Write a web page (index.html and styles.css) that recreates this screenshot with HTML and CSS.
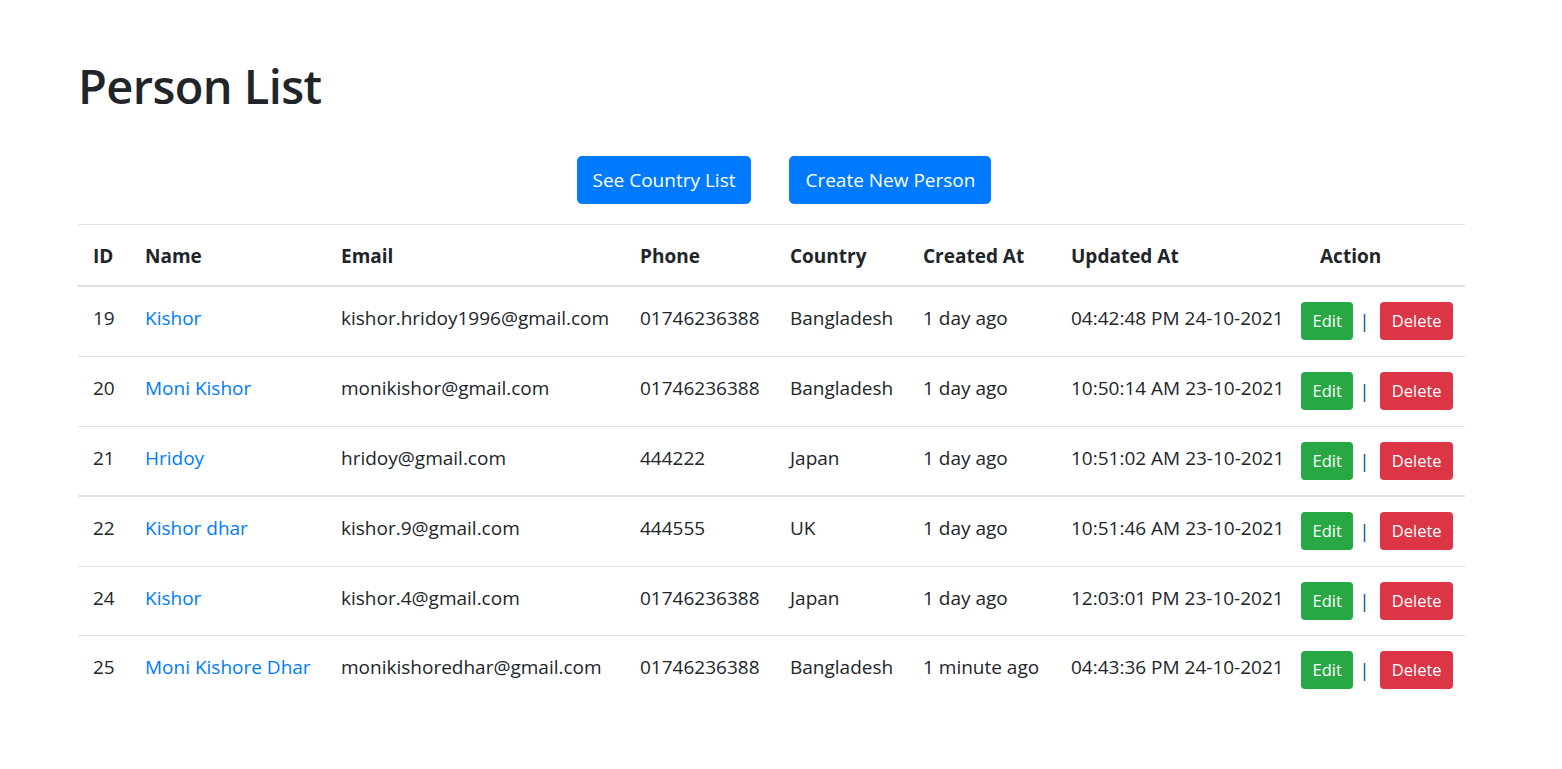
FILE: index.html
```html
<!DOCTYPE html>
<html lang="en">
<head>
<meta charset="utf-8">
<title>Person List</title>
<link rel="stylesheet" href="styles.css">
</head>
<body>
<div class="container">
  <h1 class="title">Person List</h1>
  <div class="toolbar">
    <a class="btn btn-primary" href="#">See Country List</a>
    <a class="btn btn-primary" href="#">Create New Person</a>
  </div>
  <table class="table">
    <colgroup>
      <col class="c-id"><col class="c-name"><col class="c-email"><col class="c-phone">
      <col class="c-country"><col class="c-created"><col class="c-updated"><col class="c-action">
    </colgroup>
    <thead>
      <tr>
        <th>ID</th><th>Name</th><th>Email</th><th>Phone</th><th>Country</th><th>Created At</th><th>Updated At</th><th class="th-action">Action</th>
      </tr>
    </thead>
    <tbody>
      <tr>
        <td>19</td><td><a href="#">Kishor</a></td><td>kishor.hridoy1996@gmail.com</td><td>01746236388</td><td>Bangladesh</td><td>1 day ago</td><td>04:42:48 PM 24-10-2021</td>
        <td class="td-action"><div class="actions"><a class="btn-sm btn-success" href="#">Edit</a><span class="sep">|</span><a class="btn-sm btn-danger" href="#">Delete</a></div></td>
      </tr>
      <tr>
        <td>20</td><td><a href="#">Moni Kishor</a></td><td>monikishor@gmail.com</td><td>01746236388</td><td>Bangladesh</td><td>1 day ago</td><td>10:50:14 AM 23-10-2021</td>
        <td class="td-action"><div class="actions"><a class="btn-sm btn-success" href="#">Edit</a><span class="sep">|</span><a class="btn-sm btn-danger" href="#">Delete</a></div></td>
      </tr>
      <tr class="short">
        <td>21</td><td><a href="#">Hridoy</a></td><td>hridoy@gmail.com</td><td>444222</td><td>Japan</td><td>1 day ago</td><td>10:51:02 AM 23-10-2021</td>
        <td class="td-action"><div class="actions"><a class="btn-sm btn-success" href="#">Edit</a><span class="sep">|</span><a class="btn-sm btn-danger" href="#">Delete</a></div></td>
      </tr>
      <tr class="thick">
        <td>22</td><td><a href="#">Kishor dhar</a></td><td>kishor.9@gmail.com</td><td>444555</td><td>UK</td><td>1 day ago</td><td>10:51:46 AM 23-10-2021</td>
        <td class="td-action"><div class="actions"><a class="btn-sm btn-success" href="#">Edit</a><span class="sep">|</span><a class="btn-sm btn-danger" href="#">Delete</a></div></td>
      </tr>
      <tr class="short">
        <td>24</td><td><a href="#">Kishor</a></td><td>kishor.4@gmail.com</td><td>01746236388</td><td>Japan</td><td>1 day ago</td><td>12:03:01 PM 23-10-2021</td>
        <td class="td-action"><div class="actions"><a class="btn-sm btn-success" href="#">Edit</a><span class="sep">|</span><a class="btn-sm btn-danger" href="#">Delete</a></div></td>
      </tr>
      <tr>
        <td>25</td><td><a href="#">Moni Kishore Dhar</a></td><td>monikishoredhar@gmail.com</td><td>01746236388</td><td>Bangladesh</td><td>1 minute ago</td><td>04:43:36 PM 24-10-2021</td>
        <td class="td-action"><div class="actions"><a class="btn-sm btn-success" href="#">Edit</a><span class="sep">|</span><a class="btn-sm btn-danger" href="#">Delete</a></div></td>
      </tr>
    </tbody>
  </table>
</div>
</body>
</html>
```

FILE: styles.css
```css
html, body {
  margin: 0;
  padding: 0;
  background: #fff;
}
body {
  font-family: "Open Sans", "Noto Sans", sans-serif;
  font-size: 19px;
  line-height: 30px;
  color: #212529;
}
.container {
  width: 1387px;
  margin-left: 78px;
  padding-top: 56px;
}
.title {
  margin: 0 0 40px 0;
  font-size: 47px;
  line-height: 60px;
  font-weight: 600;
  letter-spacing: -0.6px;
  color: #212529;
}
.toolbar {
  display: flex;
  justify-content: center;
  gap: 38px;
  padding-left: 25px;
  margin-bottom: 20px;
}
.btn {
  display: inline-block;
  height: 48px;
  box-sizing: border-box;
  padding: 9px 16px;
  font-size: 19px;
  line-height: 30px;
  border-radius: 5px;
  text-decoration: none;
  color: #fff;
}
.btn-primary {
  background: #007bff;
}
.table {
  width: 1387px;
  border-collapse: collapse;
  table-layout: fixed;
}
.c-id { width: 52px; }
.c-name { width: 196px; }
.c-email { width: 299px; }
.c-phone { width: 150px; }
.c-country { width: 133px; }
.c-created { width: 148px; }
.c-updated { width: 230px; }
.c-action { width: 179px; }
.table th, .table td {
  text-align: left;
  vertical-align: top;
  padding: 16px 0 15px 15px;
  border-top: 1px solid #dee2e6;
  white-space: nowrap;
}
.table th {
  font-weight: 700;
  padding-bottom: 14px;
  border-bottom: 2px solid #dee2e6;
}
.table th.th-action {
  padding-left: 34px;
}
.table td {
  height: 38px;
}
.table td.td-action {
  padding-top: 15px;
  padding-bottom: 16px;
}
.table tr.short td {
  padding-bottom: 14px;
}
.table tr.short td.td-action {
  padding-bottom: 15px;
}
.table tbody tr:first-child td {
  border-top: none;
}
.table tr.thick td {
  border-top: 2px solid #dee2e6;
}
.table td a {
  color: #007bff;
  text-decoration: none;
}
.actions {
  display: flex;
  align-items: flex-start;
}
.table td .btn-sm {
  display: inline-block;
  height: 38px;
  box-sizing: border-box;
  padding: 6px 11.5px;
  font-size: 16.5px;
  line-height: 26px;
  border-radius: 4px;
  color: #fff;
}
.btn-success { background: #28a745; }
.btn-danger { background: #dc3545; }
.sep {
  margin: 0 10.5px 0 6px;
  line-height: 38px;
  color: #0d4f8f;
}
```
